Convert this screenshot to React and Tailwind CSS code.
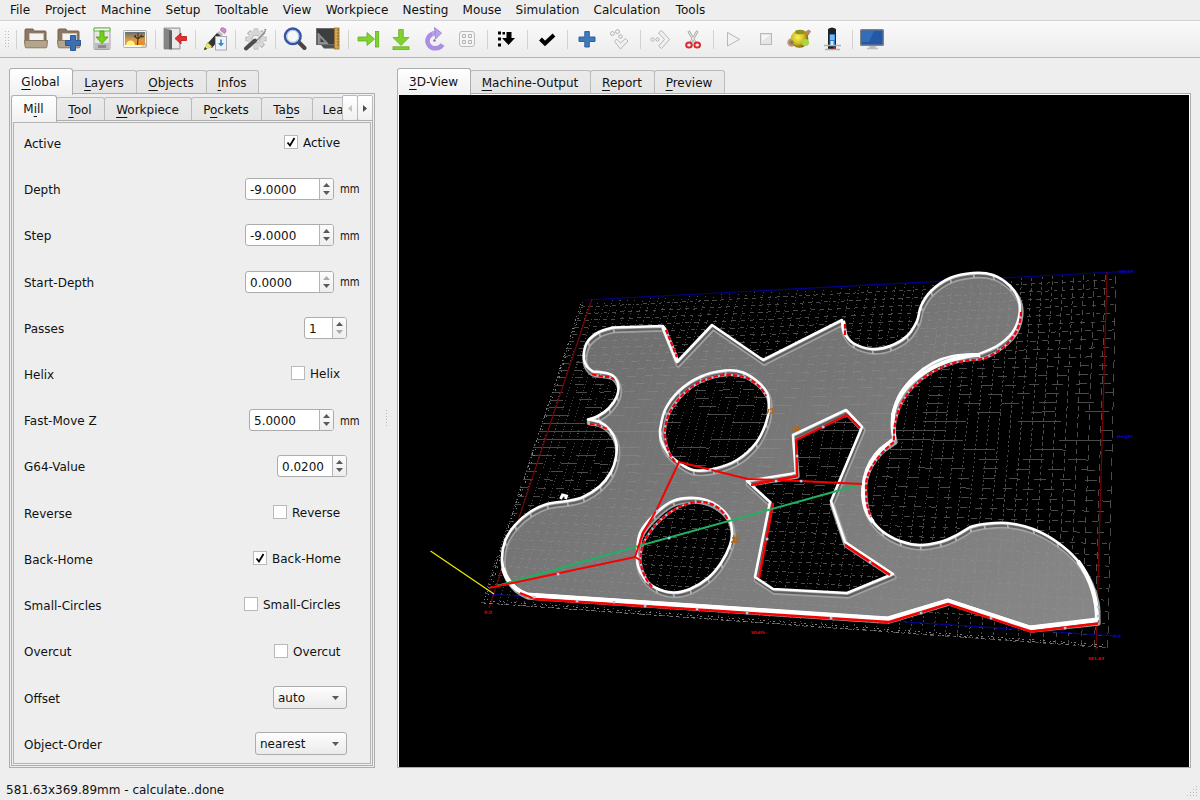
import React from "react";

/* ---------- 3D scene data ---------- */

// Each run is a smooth curve; consecutive runs meet in a corner.
const OUTLINE = [
  [[613, 327.5], [663, 326]],
  [[663, 326], [677, 362]],
  [[677, 362], [712, 325]],
  [[712, 325], [763, 360]],
  [[763, 360], [842, 320]],
  [[842, 320], [844, 332], [853, 343], [872, 349], [890, 346], [907, 336], [917, 321], [921, 306], [931, 291], [950, 278], [973, 273], [993, 275], [1010, 286], [1019, 301], [1019, 317], [1012, 333], [997, 346], [979, 354]],
  [[979, 354], [953, 356], [933, 363], [915, 376], [900, 394], [893, 413], [892, 428], [894, 439]],
  [[894, 439], [880, 449], [870, 462], [864, 478], [863, 498], [869, 516], [882, 531], [900, 541], [920, 545], [940, 542], [955, 536], [970, 527]],
  [[970, 527], [984, 524], [1007, 523], [1033, 529], [1057, 542], [1077, 560], [1090, 581], [1096, 600], [1097, 620]],
  [[1097, 620], [1030, 627]],
  [[1030, 627], [948, 600]],
  [[948, 600], [888, 618]],
  [[888, 618], [840, 615], [527, 594]],
  [[527, 594], [515, 587], [506, 575], [502, 560], [505, 541], [515, 525], [530, 512], [547, 504], [567, 501], [583, 497], [600, 486], [611, 472], [616, 457], [616, 442], [610, 430], [600, 422], [588, 419.5]],
  [[588, 419.5], [598, 416], [609, 408], [617, 396], [618, 384], [612, 375], [600, 372], [592, 371], [585, 363], [584, 352], [588, 341], [599, 332], [613, 327.5]],
];
const HOLE_A = [[[660, 430], [665, 410], [679, 391], [700, 377], [725, 370.5], [743, 372.5], [758, 382], [767, 393], [769, 407], [766, 423], [756, 443], [737, 460], [713, 469], [693, 470], [678, 462], [667, 452], [661, 440], [660, 430]]];
const HOLE_B = [[[637, 553], [640, 533], [654, 515], [673, 501], [695, 498], [713, 503], [727, 515], [732, 530], [730, 545], [721, 563], [708, 578], [690, 589], [673, 592.5], [656, 588], [644, 578], [638, 566], [637, 553]]];
const HOLE_C = [[793, 435], [846, 410], [862, 427], [831, 501], [845, 542], [893, 574], [847, 593], [773, 589], [755, 577], [770, 502], [747, 481], [796, 473], [793, 435]];

function smooth(run) {
  let d = "";
  for (let i = 0; i < run.length - 1; i++) {
    const a = run[i - 1] || run[i];
    const b = run[i];
    const c = run[i + 1];
    const e = run[i + 2] || c;
    d += `C${b[0] + (c[0] - a[0]) / 6} ${b[1] + (c[1] - a[1]) / 6} ${c[0] - (e[0] - b[0]) / 6} ${c[1] - (e[1] - b[1]) / 6} ${c[0]} ${c[1]}`;
  }
  return d;
}
const toPath = (runs) => `M${runs[0][0][0]} ${runs[0][0][1]}` + runs.map((r) => smooth(r)).join("");
const PATH_OUT = toPath(OUTLINE) + "Z";
const PATH_A = toPath(HOLE_A) + "Z";
const PATH_B = toPath(HOLE_B) + "Z";
const PATH_C = "M" + HOLE_C.map((p) => p.join(" ")).join("L") + "Z";
const PATH_ALL = PATH_OUT + PATH_A + PATH_B + PATH_C;

// Projection of the unit square onto the four corners of the work area.
const [P0, P1, P2, P3] = [[493, 594], [1097, 635], [1107, 272], [591, 300]];
const H = (() => {
  const sx = P0[0] - P1[0] + P2[0] - P3[0];
  const sy = P0[1] - P1[1] + P2[1] - P3[1];
  const dx1 = P1[0] - P2[0], dx2 = P3[0] - P2[0];
  const dy1 = P1[1] - P2[1], dy2 = P3[1] - P2[1];
  const det = dx1 * dy2 - dx2 * dy1;
  const g = (sx * dy2 - dx2 * sy) / det;
  const h = (dx1 * sy - sx * dy1) / det;
  return { a: P1[0] - P0[0] + g * P1[0], b: P3[0] - P0[0] + h * P3[0], d: P1[1] - P0[1] + g * P1[1], e: P3[1] - P0[1] + h * P3[1], g, h };
})();
function project(mx, my) {
  const u = mx / 581.63, v = my / 369.89;
  const w = H.g * u + H.h * v + 1;
  return [(H.a * u + H.b * v + P0[0]) / w, (H.d * u + H.e * v + P0[1]) / w];
}
// Dash lengths grow as a line gets closer to one of the pixel axes.
const GRID = (() => {
  const out = [];
  for (let x = -10; x <= 590; x += 10) {
    const p = project(x, -10), q = project(x, 368);
    const step = Math.abs((q[1] - p[1]) / (q[0] - p[0]));
    out.push({ p, q, dash: `${Math.max(1, Math.min(step * 0.2, 8))} ${Math.max(2.4, Math.min(step * 0.16, 6))}`, key: "v" + x });
  }
  for (let y = -10; y <= 368; y += 10) {
    const p = project(-10, y), q = project(590, y);
    const step = Math.min(Math.abs((q[0] - p[0]) / (q[1] - p[1] || 0.01)), 700);
    out.push({ p, q, dash: `${Math.max(3.5, step * 0.18)} ${Math.max(4, step * 0.22)}`, key: "h" + y });
  }
  return out;
})();

function Grid({ className }) {
  return (
    <g className={className} shapeRendering="crispEdges" strokeWidth="1">
      {GRID.map((l) => (
        <line key={l.key} x1={l.p[0]} y1={l.p[1]} x2={l.q[0]} y2={l.q[1]} strokeDasharray={l.dash} />
      ))}
    </g>
  );
}

const TICKS = [...OUTLINE, ...HOLE_A, ...HOLE_B].filter((r) => r.length > 3).flat();

const RED_CURVES = [
  "M666 330L677 357",
  "M592 374Q602 377 607 377T614 380",
  "M590 424Q600 425 607 429",
  "M845 324L845 335",
  "M1021 312C1021 328 1012 345 990 356C984 359 978 360 972 360C954 361 934 369 921 380C902 395 893 416 894 442C880 453 866 470 866 486C866 500 867 508 871 517",
  "M675 462C664 448 662 430 669 414C680 392 702 375 729 375C748 375 760 384 766 396",
  "M652 587C640 573 637 556 645 540C656 520 678 502 700 502C714 502 723 510 728 520",
];
const RED_LINES = [
  "M520 593L535 599L720 611L889 622L948 604L1031 631.5L1098 623.5",
  "M797 476L796 440L847 415L860 428",
  "M751 485L798 476",
  "M773 503L759 578",
  "M845 545L890 575",
];

function Scene() {
  return (
    <svg className="block h-full w-full" viewBox="399 95 790 672" preserveAspectRatio="none">
      <defs>
        <linearGradient id="body" x1="0" y1="0" x2="1" y2="1">
          <stop offset="0" stopColor="#6a6a6a" />
          <stop offset="1" stopColor="#888888" />
        </linearGradient>
        <clipPath id="bodyClip">
          <path d={PATH_ALL} clipRule="evenodd" />
        </clipPath>
      </defs>
      <rect x="399" y="95" width="790" height="672" fill="#000" />
      <Grid className="stroke-[#4a4a4a]" />
      <path d="M585 300L1133 271M488 594L1117 636" stroke="#000090" strokeWidth="1.1" fill="none" />
      <path d="M592 299L489 608M1107 272L1096 650" stroke="#780000" strokeWidth="1.2" fill="none" />
      <g fill="none" stroke="#7c7c7c" shapeRendering="crispEdges">
        <path d="M581 304L484 602" strokeDasharray="1 1.6 2 3 1 4.2" />
        <path d="M583 305L487 600" strokeDasharray="1 5 1.5 6.3" />
        <path d="M484 603L1107 647" strokeDasharray="2 3 3 5 1 3" />
        <path d="M490 601L1105 645" strokeDasharray="1 2 2 5.4" />
      </g>
      <path d={PATH_ALL} fill="url(#body)" fillRule="evenodd" />
      <g clipPath="url(#bodyClip)">
        <Grid className="stroke-[#959595] opacity-40" />
      </g>
      <g fill="none" strokeLinejoin="round">
        <g transform="translate(1.2 3.2)">
          <path d={PATH_ALL} stroke="#a0a0a0" strokeWidth="5" />
          <path d={PATH_ALL} stroke="#606060" strokeWidth="2" transform="translate(-0.2 -0.2)" />
        </g>
        <g stroke="#b4b4b4" strokeWidth="1.6">
          {TICKS.map((p, i) => (
            <line key={i} x1={p[0]} y1={p[1]} x2={p[0] + 1.3} y2={p[1] + 5} />
          ))}
        </g>
        <path d={PATH_ALL} stroke="#fff" strokeWidth="2.6" />
        <path d="M527 595L888 619L948 601L1030 628L1097 620" stroke="#fff" strokeWidth="5" />
        <path d="M980 355C940 357 900 380 893 415L894 439C862 462 855 500 873 522" stroke="#fff" strokeWidth="4" />
        <path d="M1078 561Q1097 588 1097 620M663 327L677 361M843 321L845 334M503 568Q508 588 528 595" stroke="#fff" strokeWidth="4" />
        {RED_CURVES.map((d) => (
          <g key={d} strokeWidth="2.2">
            <path d={d} stroke="#a9bfe6" />
            <path d={d} stroke="#f40000" strokeDasharray="4.5 2" />
          </g>
        ))}
        {RED_LINES.map((d) => (
          <path key={d} d={d} stroke="#f80000" strokeWidth="2.4" />
        ))}
      </g>
      <path d="M560.500 499l2-4l4 1l-1 3" stroke="#fff" strokeWidth="2.8" fill="none" />
      <path d="M430.500 551L494 594" stroke="#e8e800" strokeWidth="1.3" fill="none" />
      <path d="M497 586L635 547L862 484" stroke="#1fb161" strokeWidth="2" fill="none" />
      <path d="M489 588L635 557L640 560M635 557L643 533L656 511L679 462L748 479L800 481L862 484" stroke="#f80000" strokeWidth="2" fill="none" />
      <g fill="#b4c6ea">
        {[[558, 574], [669, 538], [710, 470], [776, 481], [801, 481], [657, 511], [534, 597], [577, 601], [614, 602], [645, 606], [697, 609], [747, 613], [831, 618], [921, 613], [991, 618], [1065, 628], [767, 539], [870, 562], [797, 456], [823, 427], [1098, 616], [1098, 607]].map((p) => (
          <rect key={p.join()} x={p[0] - 1.2} y={p[1] - 1.2} width="2.6" height="2.6" />
        ))}
      </g>
      <g stroke="#b9660f" strokeWidth="1.7" fill="none">
        <path d="M767 414l2-5M770 409l3 0l-1 5M792 432l2-5M795 432l1-5l3 0l-1 4M731 542l7 0M732 538l6-1l-1 5M734 542l1-4" />
      </g>
      <g className="font-['DejaVu_Sans']" fontSize="4.6" fontWeight="bold" textAnchor="middle">
        <g fill="#e00000">
          <text x="488" y="614">0.0</text>
          <text x="758" y="634" fontSize="4.200">Width</text>
          <text x="1096" y="660" fontSize="4.200">581.63</text>
        </g>
        <g fill="#0000e0">
          <text x="1117" y="638">0.0</text>
          <text x="1125" y="438" fontSize="4.200">Height</text>
          <text x="1126" y="273" fontSize="3.800">369.89</text>
        </g>
      </g>
    </svg>
  );
}

/* ---------- toolbar icons ---------- */

function Svg({ children }) {
  return (
    <svg className="h-6 w-6 shrink-0" viewBox="0 0 24 24" fill="none">
      {children}
    </svg>
  );
}

const Folder = ({ add }) => (
  <Svg>
    <path d="M1 3q0-1 1-1h7l1 2h11q1 0 1 1v12H1z" fill="#8b7860" stroke="#75634c" />
    <rect x="5.500" y="6.500" width="14" height="10" fill="#f4f4f4" stroke="#c4c4c4" />
    <path d="M.5 13.500h23l-.7 6.500q-.1.800-1 .8H2.200q-.9 0-1-.8z" fill="#b5a48c" stroke="#8b7860" />
    {add && <path d="M13.500 8.500h5v5h5v5h-5v5h-5v-5h-5v-5h5z" fill="#3c6fb1" stroke="#2a5a9c" />}
  </Svg>
);
const SaveFile = () => (
  <Svg>
    <path d="M4 1h16v20.500q0 1-1 1H5q-1 0-1-1z" fill="#e6e6e6" stroke="#a3a3a3" />
    <path d="M4 1h16v3H4z" fill="#f4fff0" stroke="#64b443" />
    <path d="M5 16h14v6H5z" fill="#bcbcbc" />
    <path d="M8 18h8v3H8z" fill="#8c8c8c" />
    <path d="M10 4h4v6h4l-6 6.500L6 10h4z" fill="#73d216" stroke="#4e9a06" strokeWidth=".8" />
  </Svg>
);
const Picture = () => (
  <Svg>
    <defs>
      <linearGradient id="dusk" x1="0" y1="0" x2="0" y2="1">
        <stop offset="0" stopColor="#64707a" />
        <stop offset=".6" stopColor="#d99a48" />
        <stop offset="1" stopColor="#ee8a12" />
      </linearGradient>
    </defs>
    <rect x=".5" y="3.500" width="23" height="17" rx="1" fill="#f5f5f2" stroke="#b0b0ac" />
    <rect x="2" y="5" width="20" height="13" fill="url(#dusk)" />
    <path d="M3 18a4.500 4.500 0 0 1 9 0z" fill="#fff07a" />
    <path d="M14.500 18l.5-6l-4-3M15 12l4-4M15 11V6M17 10l4-.5M12.500 10.500V8" stroke="#4d331c" strokeWidth="1.100" />
    <path d="M18 20.500l5-4v3q0 1-1 1z" fill="#d8d8d8" stroke="#aaa" strokeWidth=".6" />
  </Svg>
);
const Exit = () => (
  <Svg>
    <path d="M1 1h16v21H1z" fill="#c9c9c9" stroke="#999" />
    <path d="M8 2h8v19H8z" fill="#e9e9e9" />
    <path d="M1 1.500l8 2v19l-8-1z" fill="#5e605e" />
    <path d="M1 1.500l5 1.200v19.400L1 21.500z" fill="#858585" />
    <path d="M12 11.500l6-5.500v3.500h5.500v4H18V17z" fill="#e23030" stroke="#b81414" strokeWidth=".8" />
  </Svg>
);
const Pencil = () => (
  <Svg>
    <path d="M18 1q3-1 5 1.500q.5 2-1.500 4l-4-3z" fill="#d287c6" stroke="#a0619a" strokeWidth=".6" />
    <path d="M16 4l4 3.500l-1.500 2L14 6z" fill="#b9b9b9" />
    <path d="M14 6l4.500 3.500L9 21l-5-4z" fill="#333" />
    <path d="M4.500 15.500l4.500 4L1 23z" fill="#ede56a" stroke="#b2a93a" strokeWidth=".5" />
    <path d="M1 23l1-3l2 2z" fill="#222" />
    <rect x="12.500" y="9.500" width="11" height="13.500" fill="#f0f3f5" stroke="#a6abb0" />
    <path d="M17.200 12.500h1.600v3.500h2.200l-3 3.500l-3-3.500h2.200z" fill="#2a86e0" />
  </Svg>
);
const Gear = () => (
  <Svg>
    <path d="M13 1.500v21M2.500 12h21M5.600 4.600l14.800 14.800M20.400 4.600L5.600 19.400" stroke="#adadad" strokeWidth="4.600" />
    <path d="M13 2.300v19.400M3.300 12h19.400M6.200 5.200l13.600 13.600M19.800 5.200L6.200 18.800" stroke="#dedede" strokeWidth="3" />
    <circle cx="13" cy="12" r="6.200" stroke="#d6d6d6" strokeWidth="4.500" />
    <circle cx="13" cy="12" r="4" fill="#f3f3f3" stroke="#adadad" strokeWidth=".8" />
    <path d="M22.500 2l-1.500 4l-8 8" stroke="#8f9290" strokeWidth="2" />
    <path d="M22 3L13 13" stroke="#ececec" strokeWidth=".8" />
    <path d="M12 13.500L3 21.500" stroke="#4a4d4b" strokeWidth="4" strokeLinecap="round" />
  </Svg>
);
const Zoom = () => (
  <Svg>
    <path d="M16 15.500l5.500 5.500" stroke="#4b4540" strokeWidth="4" strokeLinecap="round" />
    <circle cx="9.800" cy="9.300" r="7.800" fill="#e4ebf4" stroke="#3554a5" strokeWidth="2.500" />
    <circle cx="9.800" cy="9.300" r="6" fill="#f5f7fa" stroke="#aebcd6" />
  </Svg>
);
const Blackboard = () => (
  <Svg>
    <rect x=".5" y="1.500" width="22" height="16" fill="#3c3e40" stroke="#6b6d6f" />
    <path d="M2 16.500V6l10 10.500z" fill="#898c8e" stroke="#a4a6a8" strokeWidth=".7" />
    <path d="M4.500 15v-4l4 4z" fill="#3c3e40" />
    <path d="M5 18h13l3 3.500H8z" fill="#505254" />
    <rect x="18.500" y="1" width="4.500" height="21" fill="#d3a550" stroke="#9b712a" strokeWidth=".8" />
    <path d="M21 3h2M21 6h2M21 9h2M21 12h2M21 15h2M21 18h2" stroke="#705018" strokeWidth=".8" />
  </Svg>
);
const GoEnd = () => (
  <Svg>
    <path d="M2 10h9V5.500l7.500 6.500l-7.500 6.500V14H2z" fill="#7fd32c" stroke="#62b020" strokeWidth=".8" />
    <rect x="19.500" y="4.500" width="3.200" height="15.500" fill="#7fd32c" stroke="#62b020" strokeWidth=".8" />
  </Svg>
);
const GoDown = () => (
  <Svg>
    <path d="M9.700 2.500h4.600v8H20L12 18.500L4 10.500h5.700z" fill="#7fd32c" stroke="#62b020" strokeWidth=".8" />
    <rect x="4" y="19.800" width="16" height="2.800" fill="#7fd32c" stroke="#62b020" strokeWidth=".8" />
  </Svg>
);
const Rotate = () => (
  <Svg>
    <path d="M12 6.500a8 7.500 0 1 0 8.500 11" stroke="#a98ee2" strokeWidth="4.500" />
    <path d="M10 6.500l6-.5" stroke="#b9a4e8" strokeWidth="4.500" />
    <path d="M12.500.5l7 5.500l-6 6z" fill="#b7a2e8" stroke="#9678d6" strokeWidth=".8" />
    <circle cx="12.500" cy="13.500" r="1.200" fill="#8663cf" />
  </Svg>
);
const Keypad = () => (
  <Svg>
    <rect x="4.500" y="4.500" width="15" height="15" rx="2.500" fill="#f5f5f5" stroke="#bcbcbc" />
    <path d="M7.500 7.500h3v3h-3zM13.500 7.500h3v3h-3zM7.500 13.500h3v3h-3zM13.500 13.500h3v3h-3z" stroke="#b2b2b2" />
  </Svg>
);
const Sort = () => (
  <Svg>
    <path d="M3 4.500h3v3H3zM3 10.500h3v3H3zM3 16.500h3v3H3z" fill="#000" />
    <path d="M7.500 5h2.500v2.500H7.500zM11.500 5h5v6H20l-6.500 7L7 11h4.500z" fill="#000" />
  </Svg>
);
const Check = () => (
  <Svg>
    <path d="M5.500 12l4.500 4.500l9-8.500" stroke="#000" strokeWidth="4" />
  </Svg>
);
const Plus = () => (
  <Svg>
    <path d="M9.800 4.500h4.500v5.500H20v4.500h-5.700V20H9.800v-5.500H4V10h5.800z" fill="#4279b9" stroke="#2d62a5" />
  </Svg>
);
const StepDown = () => (
  <Svg>
    <g stroke="#b6b6b6" fill="#f0f0f0">
      <circle cx="4.500" cy="6.500" r="2" /><circle cx="9.500" cy="4.500" r="2" /><circle cx="12.500" cy="9.500" r="1.800" />
      <path d="M6.500 14.500l2-2.500l4 4l5-4.500l2.500 2.500l-7.500 8z" />
    </g>
  </Svg>
);
const StepRight = () => (
  <Svg>
    <g stroke="#b6b6b6" fill="#f0f0f0">
      <circle cx="4.500" cy="12.500" r="1.700" /><circle cx="9.500" cy="12.500" r="1.700" />
      <path d="M10.500 6l3-2.500l8 9l-8 9l-3-2.500l6-6.500z" />
    </g>
  </Svg>
);
const Scissors = () => (
  <Svg>
    <path d="M7.500 4l7 12M16.500 4l-7 12" stroke="#a9aca9" strokeWidth="2.600" />
    <path d="M7.800 4.500l6.500 11M16.200 4.500L9.700 15.500" stroke="#ececec" strokeWidth="1" />
    <ellipse cx="8" cy="18" rx="2.800" ry="2.500" stroke="#da2a2f" strokeWidth="2" />
    <ellipse cx="16.200" cy="18" rx="2.800" ry="2.500" stroke="#da2a2f" strokeWidth="2" />
  </Svg>
);
const Play = () => (
  <Svg>
    <path d="M6.500 5.500v13.500l12-6.700z" fill="#f1f2f1" stroke="#b6b8b6" />
  </Svg>
);
const Stop = () => (
  <Svg>
    <rect x="6.500" y="6.500" width="11" height="11" fill="#e4e5e4" stroke="#b6b8b6" />
    <path d="M8 14l8-6H8z" fill="#f6f6f6" />
  </Svg>
);
const Axes = () => (
  <Svg>
    <defs>
      <radialGradient id="gold" cx=".4" cy=".4" r=".65">
        <stop offset="0" stopColor="#fbf35a" />
        <stop offset=".55" stopColor="#d0bd1c" />
        <stop offset="1" stopColor="#665a0a" />
      </radialGradient>
    </defs>
    <path d="M17 5l5-2.500l2 2l-4 6z" fill="#b98a66" />
    <circle cx="4.500" cy="15.500" r="4.200" fill="#c2987c" />
    <circle cx="12.500" cy="12" r="8.800" fill="url(#gold)" />
    <ellipse cx="13" cy="5" rx="5" ry="2.300" fill="#948e20" />
    <circle cx="18.500" cy="15.500" r="3.600" fill="#a9d54a" />
    <circle cx="4.500" cy="15.500" r="2.200" fill="#94785f" />
  </Svg>
);
const Spindle = () => (
  <Svg>
    <path d="M8 2q4-3.200 8 0v20H8z" fill="#1d2125" />
    <path d="M9.500 7h5.500v12H9.500z" fill="#2b7dd0" />
    <path d="M10 8h4.500v5H10z" fill="#7ab6ea" />
    <path d="M4 18.500h17M5 22.500h15" stroke="#aeb2b4" strokeWidth="1.400" />
    <path d="M10.500 14h3v4h-3z" fill="#d8e4ee" />
    <path d="M13.500 20h2v2h-2z" fill="#e02222" />
  </Svg>
);
const Screen = () => (
  <Svg>
    <path d="M10 18h5v3h-5zM7 21.500h11" fill="#bdbdbd" stroke="#bdbdbd" strokeWidth="1.500" />
    <rect x=".7" y="2.700" width="22.600" height="15.600" rx=".8" fill="#2458a4" stroke="#7f8286" strokeWidth="1.400" />
    <path d="M2 4h12l-5 11H2z" fill="#3b76c2" opacity=".7" />
  </Svg>
);

const TOOLBAR = [
  [<Folder />, <Folder add />, <SaveFile />, <Picture />],
  [<Exit />], [<Pencil />], [<Gear />],
  [<Zoom />, <Blackboard />],
  [<GoEnd />, <GoDown />, <Rotate />, <Keypad />],
  [<Sort />], [<Check />],
  [<Plus />, <StepDown />],
  [<StepRight />, <Scissors />],
  [<Play />, <Stop />, <Axes />, <Spindle />],
  [<Screen />],
];

function Toolbar() {
  return (
    <div className="flex h-[38px] items-center border-t border-b border-t-[#d2d2d2] border-b-[#b4b4b4] bg-linear-to-b from-[#fafafa] to-[#ececec]">
      <svg className="ml-[5px] h-[17px] w-[5px]" viewBox="0 0 5 17" fill="#bcbcbc">
        {[0, 3, 6, 9, 12, 15].map((y) => (
          <React.Fragment key={y}>
            <rect x="0" y={y} width="1" height="1" />
            <rect x="3" y={y} width="1" height="1" />
          </React.Fragment>
        ))}
      </svg>
      <div className="ml-[3px] flex items-center">
        {TOOLBAR.map((group, i) => (
          <React.Fragment key={i}>
            <div className="mx-[3px] h-[19px] w-px bg-[#d2d2d2]" />
            {group.map((icon, j) => (
              <div key={j} className="flex w-[33px] pl-1">
                {React.cloneElement(icon)}
              </div>
            ))}
          </React.Fragment>
        ))}
      </div>
    </div>
  );
}

/* ---------- widgets ---------- */

const MENUS = [
  ["File", "w-[35px]"], ["Project", "w-[56px]"], ["Machine", "w-[65px]"], ["Setup", "w-[49px]"], ["Tooltable", "w-[68px]"], ["View", "w-[43px]"],
  ["Workpiece", "w-[77px]"], ["Nesting", "w-[60px]"], ["Mouse", "w-[53px]"], ["Simulation", "w-[78px]"], ["Calculation", "w-[81px]"], ["Tools", "w-[46px]"],
];

// "&" stands before the letter that carries the keyboard mnemonic.
function Mnemonic({ text }) {
  const i = text.indexOf("&");
  if (i < 0) return text;
  return (
    <span>
      {text.slice(0, i)}
      <span className="underline decoration-1 underline-offset-[3px] [text-decoration-skip-ink:none]">{text[i + 1]}</span>
      {text.slice(i + 2)}
    </span>
  );
}

function TabBar({ tabs }) {
  return (
    <div className="flex h-[26px] items-end">
      {tabs.map(([label, width], i) =>
        i === 0 ? (
          <div key={label} className={`z-10 -mb-px flex h-[27px] shrink-0 items-center justify-center rounded-t-[3px] border border-b-0 border-[#aeaeae] bg-linear-to-b from-white to-[#f1f1f1] pr-px pb-px ${width}`}>
            <Mnemonic text={label} />
          </div>
        ) : (
          <div key={label} className={`-ml-px flex h-6 shrink-0 items-center justify-center rounded-t-[3px] border border-b-0 border-[#bbbbbb] bg-linear-to-b from-[#ebebeb] to-[#e5e5e5] pt-px pr-px ${width}`}>
            <Mnemonic text={label} />
          </div>
        )
      )}
    </div>
  );
}

function Arrow({ up, dim }) {
  return (
    <svg className="h-[4px] w-[7px]" viewBox="0 0 7 4">
      <path d={up ? "M3.500 0L7 4H0z" : "M0 0h7L3.500 4z"} fill={dim ? "#ababab" : "#5a5a5a"} />
    </svg>
  );
}

function Spin({ value, width, upDim, downDim }) {
  return (
    <div className={`flex h-[22px] rounded-[3px] border border-[#acacac] bg-white ${width}`}>
      <div className="flex flex-1 items-center pt-[2px] pl-1">{value}</div>
      <div className="flex w-[14px] flex-col items-center justify-center gap-[4px] rounded-r-[2px] border-l border-[#b4b4b4] bg-linear-to-b from-[#fcfcfc] to-[#eeeeee]">
        <Arrow up dim={upDim} />
        <Arrow dim={downDim} />
      </div>
    </div>
  );
}

function CheckBox({ label, checked, width, low }) {
  return (
    <div className={`flex items-center gap-[5px] pr-5 ${low ? "" : "-mt-[2px]"}`}>
      <div className="flex h-[14px] w-[14px] items-center justify-center border border-[#b9b9b9] bg-white">
        {checked && (
          <svg className="h-[10px] w-[10px]" viewBox="0 0 10 10">
            <path d="M1.500 5.500L4 8.500L8.500 1" fill="none" stroke="#000" strokeWidth="1.800" />
          </svg>
        )}
      </div>
      <span className={`pt-[2px] whitespace-nowrap ${width}`}>{label}</span>
    </div>
  );
}

function Combo({ value, width }) {
  return (
    <div className={`mr-[13px] -mt-px flex h-[23px] items-center justify-between rounded-[3px] border border-[#acacac] bg-linear-to-b from-[#fdfdfd] to-[#ebebeb] pr-[7px] pl-1 ${width}`}>
      <span className="pt-px">{value}</span>
      <Arrow />
    </div>
  );
}

function Unit({ children, low }) {
  return (
    <div className="flex items-center gap-1.5">
      {children}
      <span className={`w-5 origin-left scale-x-[0.84] ${low ? "pt-[2px]" : ""}`}>mm</span>
    </div>
  );
}

const ROWS = [
  ["Active", <CheckBox label="Active" width="w-[37px]" checked />],
  ["Depth", <Unit><Spin value="-9.0000" width="w-[89px]" /></Unit>],
  ["Step", <Unit low><Spin value="-9.0000" width="w-[89px]" /></Unit>],
  ["Start-Depth", <Unit><Spin value="0.0000" width="w-[89px]" upDim /></Unit>],
  ["Passes", <div className="mr-[13px]"><Spin value="1" width="w-[43px]" downDim /></div>],
  ["Helix", <CheckBox label="Helix" width="w-[30px]" />],
  ["Fast-Move Z", <Unit low><Spin value="5.0000" width="w-[85px]" /></Unit>],
  ["G64-Value", <div className="mr-[13px]"><Spin value="0.0200" width="w-[70px]" /></div>],
  ["Reverse", <CheckBox label="Reverse" width="w-[48px]" />],
  ["Back-Home", <CheckBox label="Back-Home" width="w-[68px]" checked />],
  ["Small-Circles", <CheckBox label="Small-Circles" width="w-[77px]" />],
  ["Overcut", <CheckBox label="Overcut" width="w-[47px]" low />],
  ["Offset", <Combo value="auto" width="w-[74px]" />],
  ["Object-Order", <Combo value="nearest" width="w-[92px]" />],
];
const EXTRA_GAP_BEFORE = ["Start-Depth", "Reverse", "Offset"];

function ScrollButton({ left }) {
  return (
    <div className="flex w-4 items-center justify-center rounded-[2px] border border-[#bbbbbb] bg-linear-to-b from-white to-[#f0f0f0] not-first:-ml-px">
      <svg className="h-[7px] w-1" viewBox="0 0 4 7">
        <path d={left ? "M4 0v7L0 3.500z" : "M0 0v7l4-3.500z"} fill={left ? "#c4c4c4" : "#4d4d4d"} />
      </svg>
    </div>
  );
}

export default function App() {
  return (
    <div className="flex h-[800px] w-[1200px] flex-col overflow-hidden bg-[#eeeeee] font-['DejaVu_Sans',sans-serif] text-[12px] leading-[14px] text-[#111] select-none">
      <div className="flex h-[20px] items-center pl-[2.500px]">
        {MENUS.map(([label, width]) => (
          <div key={label} className={`text-center whitespace-nowrap ${width}`}>{label}</div>
        ))}
      </div>
      <Toolbar />
      <div className="flex h-[711px] pt-[10px] pl-[9px]">
        <div className="flex h-[700px] w-[366px] flex-col">
          <TabBar tabs={[["&Global", "w-[64px]"], ["&Layers", "w-[65px]"], ["&Objects", "w-[71px]"], ["&Infos", "w-[53px]"]]} />
          <div className="-mt-px flex min-h-0 flex-1 flex-col border border-[#aeaeae] px-px pb-px">
            <div className="mt-px flex h-[26px] w-[362px] shrink-0">
              <div className="w-[331px]">
                <TabBar tabs={[["M&ill", "w-[46px]"], ["&Tool", "w-[49px]"], ["&Workpiece", "w-[88px]"], ["P&ockets", "w-[71px]"], ["Ta&bs", "w-[52px]"], ["Lea", "w-[31px] pl-[12px] pr-0 rounded-tr-none"]]} />
              </div>
              <div className="flex h-[26px] flex-1">
                <ScrollButton left />
                <ScrollButton />
              </div>
            </div>
            <div className="-mt-px flex min-h-0 flex-1 flex-col border border-[#aeaeae] p-px">
              <div className="flex min-h-0 flex-1 flex-col border border-[#b4b4b4]">
                <div className="-mt-[3px] flex flex-col">
                  {ROWS.map(([label, control]) => (
                    <div key={label} className={`flex h-[46px] items-center justify-between pr-[10px] pl-[10px] ${EXTRA_GAP_BEFORE.includes(label) ? "mt-px" : ""}`}>
                      <span className="pt-[2px]">{label}</span>
                      {control}
                    </div>
                  ))}
                </div>
              </div>
            </div>
          </div>
        </div>
        <div className="flex h-[700px] w-[22px] items-center justify-center">
          <div className="h-[17px] w-px bg-[repeating-linear-gradient(#b8b8b8_0_1px,transparent_1px_3px)]" />
        </div>
        <div className="flex h-[700px] w-[794px] flex-col">
          <TabBar tabs={[["&3D-View", "w-[74px]"], ["&Machine-Output", "w-[121px]"], ["&Report", "w-[65px]"], ["&Preview", "w-[71px]"]]} />
          <div className="-mt-px min-h-0 flex-1 border border-[#aeaeae] bg-white px-px pt-px">
            <Scene />
          </div>
        </div>
      </div>
      <div className="flex flex-1 items-start justify-between pt-[14px] pl-[6px]">
        <span>581.63x369.89mm - calculate..done</span>
        <svg className="mt-[2px] h-[14px] w-[14px]" viewBox="0 0 14 14" fill="#b8b8b8">
          {[[10, 1], [7, 4], [10, 4], [4, 7], [7, 7], [10, 7], [1, 10], [4, 10], [7, 10], [10, 10]].map((p) => (
            <rect key={p.join()} x={p[0]} y={p[1]} width="1" height="1" />
          ))}
        </svg>
      </div>
    </div>
  );
}
